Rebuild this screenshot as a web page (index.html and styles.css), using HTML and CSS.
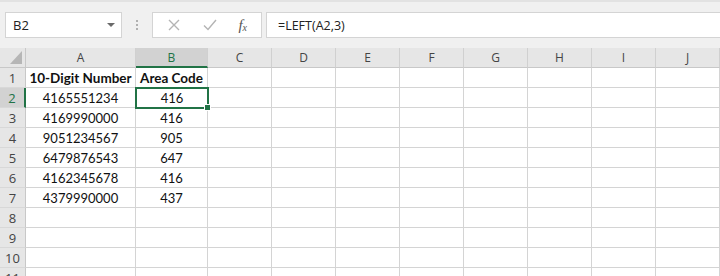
FILE: index.html
```html
<!DOCTYPE html>
<html lang="en">
<head>
  <meta charset="UTF-8">
  <title>Area Code</title>
  <link rel="stylesheet" href="styles.css">
</head>
<body>
  <div class="toolbar">
    <div class="namebox">
      <span>B2</span>
      <span class="drop"></span>
    </div>
    <div class="grip"><i></i><i></i><i></i></div>
    <div class="fxbox">
      <svg width="14" height="14" viewBox="0 0 14 14"><path d="M2 2 L12 12 M12 2 L2 12" stroke="#b4b4b4" stroke-width="1.4" fill="none"/></svg>
      <svg width="16" height="14" viewBox="0 0 16 14"><path d="M2 7.5 L6 11.5 L14 2" stroke="#b4b4b4" stroke-width="1.4" fill="none"/></svg>
      <span class="fx">f<sub>x</sub></span>
    </div>
    <div class="formula">=LEFT(A2,3)</div>
  </div>

  <div class="sheet">
    <div class="corner"><span class="tri"></span></div>
    <div class="colhead">A</div>
    <div class="colhead active">B</div>
    <div class="colhead">C</div>
    <div class="colhead">D</div>
    <div class="colhead">E</div>
    <div class="colhead">F</div>
    <div class="colhead">G</div>
    <div class="colhead">H</div>
    <div class="colhead">I</div>
    <div class="colhead">J</div>
  </div>
  <div class="sheet" id="rows"></div>

  <script>
    const data = [
      ['10-Digit Number', 'Area Code'],
      ['4165551234', '416'],
      ['4169990000', '416'],
      ['9051234567', '905'],
      ['6479876543', '647'],
      ['4162345678', '416'],
      ['4379990000', '437']
    ];
    const rows = document.getElementById('rows');
    for (let r = 1; r <= 11; r++) {
      const head = document.createElement('div');
      head.className = 'rowhead' + (r === 2 ? ' active' : '');
      head.textContent = r;
      rows.appendChild(head);
      for (let c = 0; c < 10; c++) {
        const cell = document.createElement('div');
        cell.className = 'cell';
        const row = data[r - 1];
        if (row && c < 2) {
          cell.textContent = row[c];
          if (r === 1) cell.classList.add('bold');
        }
        if (r === 2 && c === 1) {
          cell.classList.add('selected');
          const handle = document.createElement('span');
          handle.className = 'handle';
          cell.appendChild(handle);
        }
        rows.appendChild(cell);
      }
    }
  </script>
</body>
</html>
```

FILE: styles.css
```css
body {
  margin: 0;
  background: #ffffff;
  overflow: hidden;
  font-family: Lato, sans-serif;
}
.toolbar {
  display: flex;
  align-items: center;
  height: 48px;
  padding: 10px 0 10px 5px;
  background: #f0f0f0;
  border-top: 2px solid #e2e2e2;
  box-sizing: border-box;
}
.namebox,
.fxbox,
.formula {
  height: 26px;
  box-sizing: border-box;
  background: #ffffff;
  border: 1px solid #d4d4d4;
  display: flex;
  align-items: center;
}
.namebox {
  width: 117px;
  padding: 0 6px 0 7px;
  justify-content: space-between;
  font-family: "Open Sans", sans-serif;
  font-size: 13px;
  color: #222;
}
.drop {
  width: 0;
  height: 0;
  border-left: 4px solid transparent;
  border-right: 4px solid transparent;
  border-top: 4px solid #6a6a6a;
}
.grip {
  width: 30px;
  display: flex;
  flex-direction: column;
  align-items: center;
  gap: 2px;
}
.grip i {
  width: 2px;
  height: 2px;
  background: #b0b0b0;
}
.fxbox {
  width: 110px;
  padding: 0 14px;
  justify-content: space-between;
}
.fx {
  font-family: "Liberation Serif", serif;
  font-style: italic;
  font-size: 15px;
  color: #555;
}
.fx sub {
  font-size: 10px;
  vertical-align: -1px;
}
.formula {
  flex: 1;
  margin-left: 4px;
  border-right: none;
  padding-left: 11px;
  font-family: "Open Sans", sans-serif;
  font-size: 12.5px;
  color: #222;
}
.sheet {
  display: grid;
  grid-template-columns: 26px 110px 72px repeat(8, 64px);
}
#rows {
  grid-auto-rows: 20px;
}
.corner,
.colhead,
.rowhead {
  background: #e6e6e6;
  border-right: 1px solid #c8c8c8;
  border-bottom: 1px solid #c8c8c8;
  box-sizing: border-box;
  font-family: "Open Sans", sans-serif;
  font-size: 12px;
  color: #444;
  display: flex;
  align-items: center;
  justify-content: center;
}
.colhead {
  height: 20px;
  border-right-color: #d0d0d0;
}
.colhead.active {
  background: #d2d2d2;
  color: #217346;
  border-bottom: 2px solid #217346;
}
.corner {
  position: relative;
}
.tri {
  position: absolute;
  right: 3px;
  bottom: 3px;
  width: 0;
  height: 0;
  border-left: 12px solid transparent;
  border-bottom: 13px solid #b6b6b6;
}
.rowhead {
  border-bottom: 1px solid #d8d8d8;
  font-size: 13px;
}
.rowhead.active {
  background: #d2d2d2;
  color: #217346;
  border-right: 2px solid #217346;
}
.cell {
  border-right: 1px solid #d4d4d4;
  border-bottom: 1px solid #d4d4d4;
  box-sizing: border-box;
  display: flex;
  align-items: center;
  justify-content: center;
  font-size: 13px;
  color: #111;
}
.cell.bold {
  font-weight: bold;
  font-size: 13.5px;
}
.cell.selected {
  position: relative;
  border: none;
  outline: 2px solid #217346;
  outline-offset: -1px;
}
.handle {
  position: absolute;
  right: -3px;
  bottom: -3px;
  width: 5px;
  height: 5px;
  background: #217346;
  border: 1px solid #ffffff;
}
```
